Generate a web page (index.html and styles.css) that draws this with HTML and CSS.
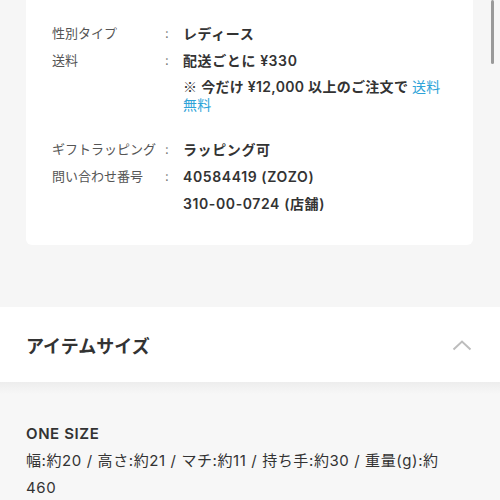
FILE: index.html
```html
<!DOCTYPE html>
<html lang="ja">
  <head>
    <meta charset="UTF-8" />
    <meta name="viewport" content="width=device-width, initial-scale=1.0" />
    <title>アイテム詳細</title>
    <link rel="stylesheet" href="styles.css">
  </head>
  <body>
    <div class="scrollbar"></div>

    <div class="info-card">
      <div class="info-row">
        <div class="info-label">性別タイプ</div>
        <div class="info-colon">:</div>
        <div class="info-value">レディース</div>
      </div>
      <div class="info-row">
        <div class="info-label">送料</div>
        <div class="info-colon">:</div>
        <div class="info-value">
          <div>配送ごとに ¥330</div>
          <div class="info-note"><span class="mark">※</span> 今だけ ¥12,000 以上のご注文で <a class="link" href="#">送料無料</a></div>
        </div>
      </div>
      <div class="info-row group-start">
        <div class="info-label">ギフトラッピング</div>
        <div class="info-colon">:</div>
        <div class="info-value">ラッピング可</div>
      </div>
      <div class="info-row">
        <div class="info-label">問い合わせ番号</div>
        <div class="info-colon">:</div>
        <div class="info-value">
          <div>40584419 (ZOZO)</div>
          <div>310-00-0724 (店舗)</div>
        </div>
      </div>
    </div>

    <div class="section-header">
      <h2>アイテムサイズ</h2>
      <svg class="chevron" width="20" height="12" viewBox="0 0 20 12">
        <polyline points="1.5,10.5 10,2.5 18.5,10.5" fill="none" stroke="#bdbdbd" stroke-width="2" />
      </svg>
    </div>

    <div class="size-body">
      <div class="size-name">ONE SIZE</div>
      <p class="size-text">幅:約20 / 高さ:約21 / マチ:約11 / 持ち手:約30 / 重量(g):約460</p>
    </div>
  </body>
</html>
```

FILE: styles.css
```css
body {
  margin: 0;
  background-color: #f6f6f6;
  font-family: Inter, "Noto Sans CJK JP", sans-serif;
  color: #333;
  overflow: hidden;
}

.scrollbar {
  position: fixed;
  top: 0;
  left: 491px;
  width: 3px;
  height: 64px;
  background-color: #9a9a9a;
  border-radius: 2px;
}

.info-card {
  margin: 0 27px 0 26px;
  padding: 20px 26px 28px 26px;
  background-color: white;
  border-radius: 0 0 6px 6px;
}

.info-row {
  display: flex;
  line-height: 27px;
}

.group-start {
  margin-top: 22px;
}

.info-label {
  width: 110px;
  font-size: 13px;
  color: #555;
}

.info-colon {
  width: 21px;
  padding-left: 3px;
  box-sizing: border-box;
  font-size: 13px;
  color: #777;
}

.info-value {
  flex: 1;
  font-size: 14px;
  font-weight: 600;
  letter-spacing: 0.6px;
  color: #333;
}

.info-note {
  margin-top: 4px;
  line-height: 18px;
  letter-spacing: 0.3px;
}

.mark {
  font-family: "Noto Sans CJK JP", sans-serif;
  font-weight: normal;
  line-height: 1;
}

.link {
  color: #2ea3d8;
  text-decoration: none;
  font-weight: normal;
}

.section-header {
  margin-top: 62px;
  height: 75px;
  padding: 0 28px 0 26px;
  background-color: white;
  display: flex;
  align-items: center;
  justify-content: space-between;
}

.section-header h2 {
  margin: 0;
  font-size: 18px;
  font-weight: bold;
  color: #333;
}

.size-body {
  padding: 38px 40px 0 26px;
  background: linear-gradient(#ededed, #f7f7f7 12px);
  height: 200px;
}

.size-name {
  font-size: 15px;
  font-weight: 600;
  letter-spacing: 0.6px;
  line-height: 27px;
}

.size-text {
  margin: 0;
  font-size: 15px;
  letter-spacing: 0.6px;
  line-height: 27px;
  color: #333;
}
```
